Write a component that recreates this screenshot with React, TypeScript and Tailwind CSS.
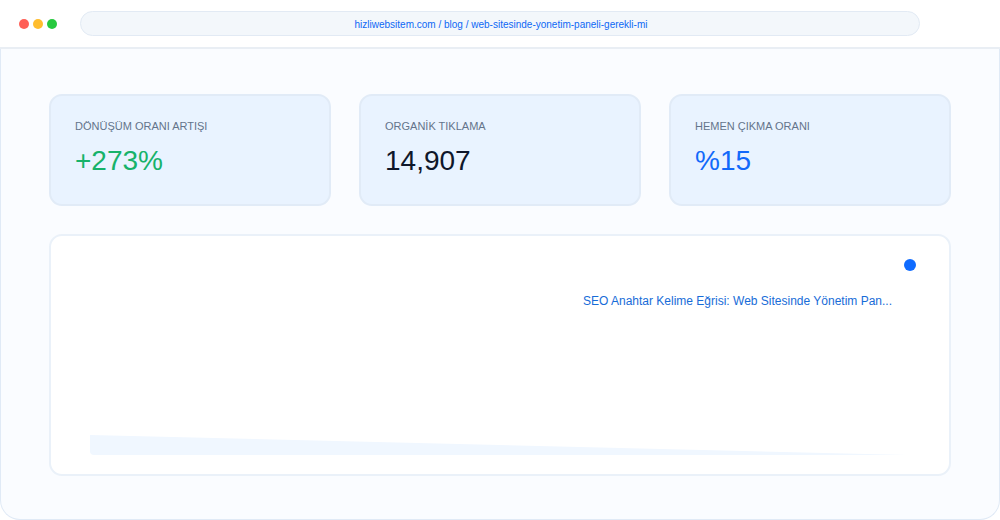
import React from 'react';

const stats = [
    { label: 'DÖNÜŞÜM ORANI ARTIŞI', value: '+273%', color: 'text-[#17b26a]' },
    { label: 'ORGANİK TIKLAMA', value: '14,907', color: 'text-[#0f172a]' },
    { label: 'HEMEN ÇIKMA ORANI', value: '%15', color: 'text-[#1269fa]' },
];

const BrowserBar = () => (
    <header className="flex h-[49px] items-center border-b-2 border-[#e9eef4] bg-white pl-[19px] pr-20">
        <div className="mr-[23px] flex gap-1">
            <span className="size-2.5 rounded-full bg-[#ff5f56]" />
            <span className="size-2.5 rounded-full bg-[#ffbd2e]" />
            <span className="size-2.5 rounded-full bg-[#27c93f]" />
        </div>
        <input
            type="text"
            readOnly
            aria-label="Adres"
            value="hizliwebsitem.com / blog / web-sitesinde-yonetim-paneli-gerekli-mi"
            className="h-[25px] min-w-0 flex-1 rounded-full border border-[#e2eaf4] bg-[#f3f7fb] pl-0.5 pt-0.5 text-center text-[10px] text-[#0d68f5] outline-none"
        />
    </header>
);

const StatCard = ({ label, value, color }: { label: string; value: string; color: string }) => (
    <div className="h-28 rounded-[13px] border-2 border-[#e1ebf7] bg-[#e9f3ff] px-6 py-[22px]">
        <p className="text-[11px] leading-4 text-[#64748b]">{label}</p>
        <p className={`mt-2 text-[28px] leading-[38px] ${color}`}>{value}</p>
    </div>
);

const App = () => {
    return (
        <div className="flex min-h-screen flex-col bg-white font-['Liberation_Sans',Arial,sans-serif]">
            <BrowserBar />
            <main className="flex flex-1 flex-col gap-7 rounded-b-[20px] border border-t-0 border-[#e0eaf6] bg-[#fafcff] px-12 pb-[43px] pt-[45px]">
                <section className="grid grid-cols-3 gap-7">
                    {stats.map((stat) => (
                        <StatCard key={stat.label} {...stat} />
                    ))}
                </section>

                {/* Keyword curve */}
                <section className="flex flex-1 flex-col rounded-[13px] border-2 border-[#eaf1f9] bg-white pb-[19px] pl-[39px] pr-[33px] pt-[23px]">
                    <span className="size-3 self-end rounded-full bg-[#0f6bff]" />
                    <h2 className="mr-6 mt-[22px] self-end text-xs text-[#176cd8]">
                        SEO Anahtar Kelime Eğrisi: Web Sitesinde Yönetim Pan...
                    </h2>
                    <svg
                        viewBox="0 0 820 20"
                        preserveAspectRatio="none"
                        className="mt-auto block h-5 w-full pr-2"
                        aria-hidden="true"
                    >
                        <path d="M0 0 L820 20 H4 Q0 20 0 16 Z" fill="#f0f7ff" />
                    </svg>
                </section>
            </main>
        </div>
    );
};

export default App;
